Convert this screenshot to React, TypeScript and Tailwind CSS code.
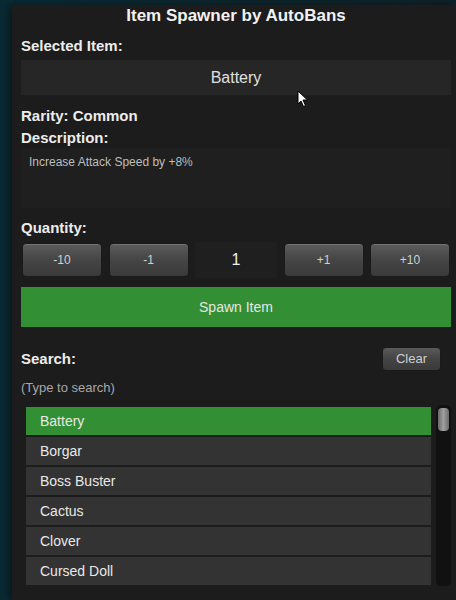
import React from "react";

const items = ["Battery", "Borgar", "Boss Buster", "Cactus", "Clover", "Cursed Doll"];

function QtyButton({ label }: { label: string }) {
  return (
    <div className="w-[80px] h-[34px] rounded-[4px] border border-[#1a1a1a] bg-gradient-to-b from-[#5c5c5c] via-[#454545] to-[#3a3a3a] shadow-[inset_0_1px_0_rgba(255,255,255,0.15)] flex items-center justify-center text-[12px] text-[#d0d0d0]">
      {label}
    </div>
  );
}

export default function App() {
  return (
    <div
      className="w-[456px] h-[600px] overflow-hidden bg-gradient-to-r from-[#0a2a33] to-[#0f2228] pl-[12px] pt-[5px] flex"
      style={{ fontFamily: '"Liberation Sans", Arial, sans-serif' }}
    >
      <div className="flex-1 bg-[#1c1c1c] shadow-[-4px_0_8px_rgba(0,0,0,0.4)] pl-[9px] pr-[6px] flex flex-col">
        <div className="h-[20px] mt-[1px] flex items-center justify-center text-[17px] font-bold text-[#f2f2f2]">
          Item Spawner by AutoBans
        </div>
        <div className="h-[18px] mt-[11px] flex items-center text-[15px] font-bold text-[#ececec]">
          Selected Item:
        </div>
        <div className="h-[35px] mt-[5px] bg-[#262626] flex items-center justify-center text-[16px] text-[#e0e0e0] relative">
          Battery
          <svg className="absolute left-[276px] top-[30px]" width="12" height="18" viewBox="0 0 12 18">
            <path d="M1 1 L1 14 L4 11 L6.5 16.5 L8.5 15.5 L6 10 L10.5 10 Z" fill="#ffffff" stroke="#000" strokeWidth="1" />
          </svg>
        </div>
        <div className="h-[18px] mt-[12px] flex items-center text-[15px] font-bold text-[#ececec]">
          Rarity: Common
        </div>
        <div className="h-[18px] mt-[4px] flex items-center text-[15px] font-bold text-[#ececec]">
          Description:
        </div>
        <div className="h-[60px] mt-[1px] bg-[#1f1f1f] pl-[8px] pt-[6px] text-[12px] text-[#bdbdbd] leading-[16px]">
          Increase Attack Speed by +8%
        </div>
        <div className="h-[18px] mt-[11px] flex items-center text-[15px] font-bold text-[#ececec]">
          Quantity:
        </div>
        <div className="mt-[6px] h-[34px] flex items-center justify-between pl-[1px] pr-[1px]">
          <QtyButton label="-10" />
          <QtyButton label="-1" />
          <div className="w-[82px] h-[36px] bg-[#1f1f1f] flex items-center justify-center text-[16px] text-[#f0f0f0]">
            1
          </div>
          <QtyButton label="+1" />
          <QtyButton label="+10" />
        </div>
        <div className="mt-[10px] h-[40px] bg-[#338f33] flex items-center justify-center text-[14px] text-[#e6e6e6]">
          Spawn Item
        </div>
        <div className="mt-[20px] h-[24px] flex items-center justify-between">
          <div className="text-[15px] font-bold text-[#ececec]">Search:</div>
          <div className="mr-[10px] w-[59px] h-[24px] rounded-[4px] border border-[#1a1a1a] bg-gradient-to-b from-[#5a5a5a] via-[#444444] to-[#3a3a3a] flex items-center justify-center text-[13px] text-[#cfcfcf]">
            Clear
          </div>
        </div>
        <div className="mt-[8px] h-[18px] flex items-center text-[13px] text-[#a8a8a8]">
          (Type to search)
        </div>
        <div className="mt-[8px] flex gap-[5px] pl-[5px]">
          <div className="w-[405px] pt-[2px] flex flex-col gap-[2px]">
            {items.map((it, i) => (
              <div
                key={it}
                className={
                  i === 0
                    ? "h-[28px] bg-[#338f33] flex items-center pl-[14px] text-[14px] text-[#e8e8e8]"
                    : "h-[28px] bg-[#333333] flex items-center pl-[14px] text-[14px] text-[#e8e8e8]"
                }
              >
                {it}
              </div>
            ))}
          </div>
          <div className="w-[15px] h-[181px] rounded-[5px] bg-[#111111] p-[2px] pt-[3px]">
            <div className="w-[11px] h-[23px] rounded-[4px] bg-gradient-to-r from-[#6a6a6a] via-[#a0a0a0] to-[#6a6a6a]" />
          </div>
        </div>
      </div>
    </div>
  );
}
